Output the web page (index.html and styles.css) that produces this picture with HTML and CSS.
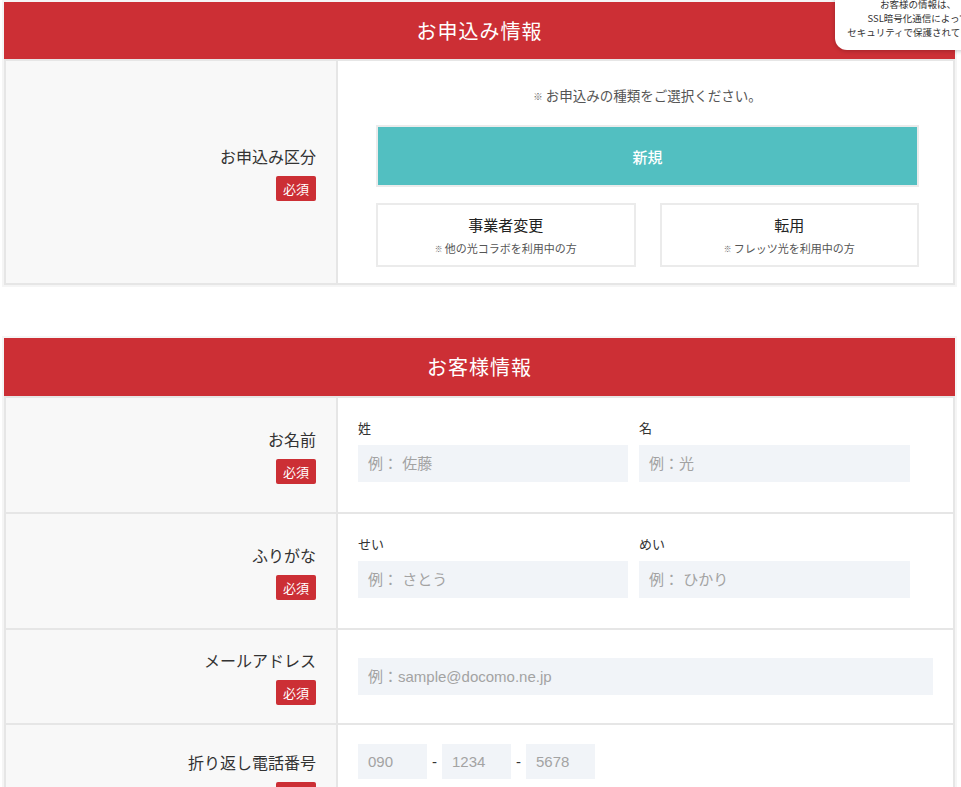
FILE: index.html
```html
<!DOCTYPE html>
<html lang="ja">
<head>
<meta charset="utf-8">
<title>お申込み</title>
<link rel="stylesheet" href="styles.css">
</head>
<body>
<div class="page">
  <div class="notice">
    <p>お客様の情報は、</p>
    <p>SSL暗号化通信によって</p>
    <p>セキュリティで保護されています</p>
  </div>

  <section class="section">
    <h2 class="section-title">お申込み情報</h2>
    <div class="table">
      <div class="row">
        <div class="label-cell">
          <span class="label">お申込み区分</span>
          <span class="badge">必須</span>
        </div>
        <div class="value-cell value-type">
          <p class="type-note"><span class="kome">※</span> お申込みの種類をご選択ください。</p>
          <div class="choice choice-main">新規</div>
          <div class="choice-pair">
            <div class="choice">
              <span class="choice-title">事業者変更</span>
              <span class="choice-sub"><span class="kome">※</span> 他の光コラボを利用中の方</span>
            </div>
            <div class="choice">
              <span class="choice-title">転用</span>
              <span class="choice-sub"><span class="kome">※</span> フレッツ光を利用中の方</span>
            </div>
          </div>
        </div>
      </div>
    </div>
  </section>

  <section class="section section-customer">
    <h2 class="section-title section-title-tall">お客様情報</h2>
    <div class="table">
      <div class="row">
        <div class="label-cell">
          <span class="label">お名前</span>
          <span class="badge">必須</span>
        </div>
        <div class="value-cell value-pair">
          <div class="pair">
            <div class="field">
              <span class="field-label">姓</span>
              <div class="input">例： 佐藤</div>
            </div>
            <div class="field">
              <span class="field-label">名</span>
              <div class="input">例：光</div>
            </div>
          </div>
        </div>
      </div>
      <div class="row">
        <div class="label-cell">
          <span class="label">ふりがな</span>
          <span class="badge">必須</span>
        </div>
        <div class="value-cell value-pair">
          <div class="pair">
            <div class="field">
              <span class="field-label">せい</span>
              <div class="input">例： さとう</div>
            </div>
            <div class="field">
              <span class="field-label">めい</span>
              <div class="input">例： ひかり</div>
            </div>
          </div>
        </div>
      </div>
      <div class="row">
        <div class="label-cell">
          <span class="label">メールアドレス</span>
          <span class="badge">必須</span>
        </div>
        <div class="value-cell value-mail">
          <div class="input input-wide">例：sample@docomo.ne.jp</div>
        </div>
      </div>
      <div class="row">
        <div class="label-cell">
          <span class="label">折り返し電話番号</span>
          <span class="badge">必須</span>
        </div>
        <div class="value-cell value-tel">
          <div class="tel">
            <div class="input input-tel">090</div>
            <span class="dash">-</span>
            <div class="input input-tel">1234</div>
            <span class="dash">-</span>
            <div class="input input-tel">5678</div>
          </div>
        </div>
      </div>
    </div>
  </section>
</div>
</body>
</html>
```

FILE: styles.css
```css
* { box-sizing: border-box; }
html, body {
  margin: 0;
  padding: 0;
  background: #fff;
}
body {
  font-family: "Noto Sans CJK JP", "Noto Sans", sans-serif;
  color: #333;
}
p { margin: 0; }

.page {
  position: relative;
  overflow: hidden;
  height: 787px;
}

.notice {
  position: absolute;
  top: -6px;
  right: -40px;
  width: 166px;
  padding: 3px 10px 11px;
  background: #fff;
  border-radius: 0 0 0 12px;
  box-shadow: 0 1px 4px rgba(0, 0, 0, 0.22);
  font-size: 9.5px;
  line-height: 14px;
  color: #333;
  text-align: center;
  white-space: nowrap;
  z-index: 2;
}

.section {
  margin: 0 4px 0 2px;
  border: 2px solid #f5f5f5;
}
.section-customer {
  margin-top: 49px;
}

.section-title {
  margin: 0;
  height: 57px;
  background: #cc2f35;
  color: #fff;
  font-size: 20px;
  font-weight: 400;
  letter-spacing: 0.05em;
  line-height: 57px;
  text-align: center;
}
.section-title-tall {
  height: 58px;
  line-height: 58px;
}

.table {
  border: 2px solid #e6e6e6;
  border-bottom: none;
}

.row {
  display: grid;
  grid-template-columns: 332px 1fr;
  border-bottom: 2px solid #e6e6e6;
}

.label-cell {
  background: #f8f8f8;
  border-right: 2px solid #e6e6e6;
  display: flex;
  flex-direction: column;
  align-items: flex-end;
  justify-content: center;
  padding-right: 20px;
}
.label {
  font-size: 16px;
  line-height: 24px;
  color: #333;
}
.badge {
  margin-top: 8px;
  display: inline-block;
  height: 25px;
  padding: 0 7px;
  background: #cc2f35;
  color: #fff;
  font-size: 13px;
  line-height: 25px;
  border-radius: 2px;
}

.value-cell {
  background: #fff;
}

/* application type */
.value-type {
  padding: 24px 34px 16px 38px;
}
.type-note {
  font-size: 13.5px;
  line-height: 20px;
  text-align: center;
  color: #555;
  margin-bottom: 19px;
}
.kome {
  font-family: "Noto Sans CJK JP", sans-serif;
  font-size: 0.7em;
  vertical-align: 1px;
  color: #666;
}
.choice {
  border: 2px solid #ebebeb;
  background: #fff;
  display: flex;
  flex-direction: column;
  align-items: center;
  justify-content: center;
  height: 64px;
}
.choice-main {
  height: 62px;
  background: #52bfc1;
  color: #fff;
  font-size: 15px;
  font-weight: 500;
}
.choice-pair {
  margin-top: 16px;
  display: grid;
  grid-template-columns: 1fr 1fr;
  column-gap: 24px;
}
.choice-title {
  font-size: 15px;
  line-height: 22px;
  color: #222;
}
.choice-sub {
  margin-top: 4px;
  font-size: 11px;
  line-height: 16px;
  color: #555;
}

/* inputs */
.input {
  height: 37px;
  background: #f1f4f8;
  color: #a3a3a3;
  font-family: "Liberation Sans", "Noto Sans CJK JP", sans-serif;
  font-size: 15px;
  line-height: 37px;
  padding-left: 10px;
}

.value-pair {
  padding: 20px 20px 30px;
}
.pair {
  display: grid;
  grid-template-columns: 270px 271px;
  column-gap: 11px;
}
.field-label {
  display: block;
  font-size: 13px;
  line-height: 20px;
  color: #333;
  margin-bottom: 7px;
}

.value-mail {
  padding: 28px 20px 28px;
}
.input-wide {
  width: 575px;
}

.value-tel {
  padding: 19px 20px 53px;
}
.tel {
  display: flex;
  align-items: center;
}
.input-tel {
  width: 69px;
  height: 35px;
  line-height: 35px;
}
.dash {
  width: 15px;
  text-align: center;
  font-family: "Liberation Sans", sans-serif;
  font-size: 15px;
  color: #333;
}
```
